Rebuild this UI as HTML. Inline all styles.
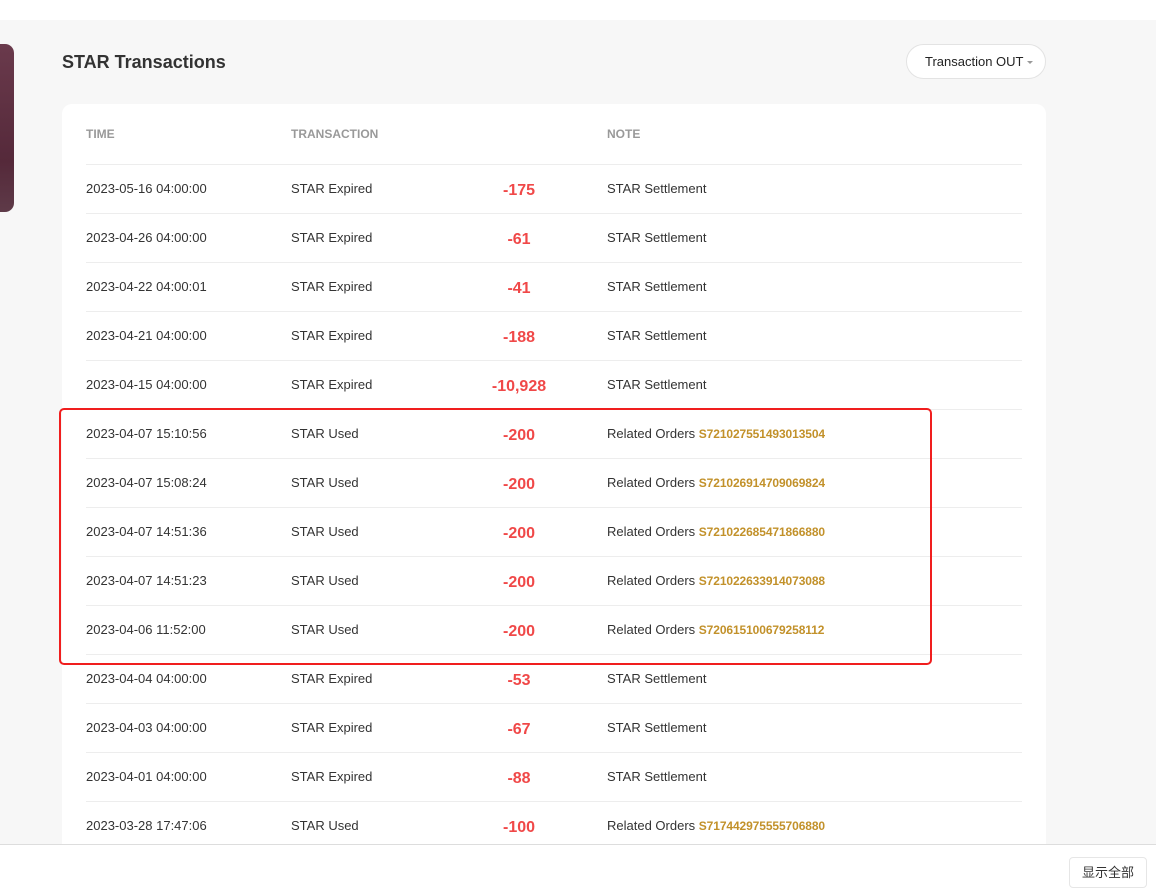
<!DOCTYPE html>
<html><head><meta charset="utf-8"><style>
*{margin:0;padding:0;box-sizing:border-box}
body{width:1156px;height:893px;overflow:hidden;background:#fff;font-family:"Liberation Sans","Noto Sans CJK SC",sans-serif;position:relative}
.bg{position:absolute;left:0;top:20px;width:1156px;height:824px;background:#f7f7f7}
.side{position:absolute;left:-10px;top:44px;width:24px;height:168px;border-radius:0 9px 9px 0;background:linear-gradient(180deg,#6a3a4c,#55293a 70%,#5e3a48)}
h1{position:absolute;left:62px;top:52px;font-size:18px;font-weight:bold;color:#333}
.sel{position:absolute;left:906px;top:44px;width:140px;height:35px;border:1px solid #e3e3e3;border-radius:18px;background:#fff;font-size:13px;color:#222;line-height:33px;padding-left:18px}
.sel:after{content:"";position:absolute;left:120px;top:16px;border:3px solid transparent;border-top:3px solid #999}
.card{position:absolute;left:62px;top:104px;width:984px;height:760px;background:#fff;border-radius:10px}
.row{position:absolute;left:24px;width:936px;height:49px;border-top:1px solid #ededed;font-size:13px;color:#333}
.row span{position:absolute;top:16px;white-space:nowrap}
.t{left:0}.x{left:205px}.a{left:360px;width:146px;text-align:center;color:#f04848;font-weight:bold;font-size:16px;top:17px!important}.n{left:521px}
.o{color:#c2912a;font-weight:bold;font-size:12px;letter-spacing:-0.1px}
.hd{position:absolute;top:23px;font-size:12px;color:#999;font-weight:bold}
.red{position:absolute;left:59px;top:408px;width:873px;height:257px;border:2px solid #f01e1e;border-radius:5px}
.foot{position:absolute;left:0;top:844px;width:1156px;height:49px;background:#fff;border-top:1px solid #ddd}
.btn{position:absolute;left:1069px;top:12px;width:78px;height:31px;border:1px solid #e6e6e6;border-radius:4px;font-size:13px;color:#333;text-align:center;line-height:29px}
</style></head><body>
<div class="bg"></div>
<div class="side"></div>
<h1>STAR Transactions</h1>
<div class="sel">Transaction OUT</div>
<div class="card">
<span class="hd" style="left:24px">TIME</span>
<span class="hd" style="left:229px">TRANSACTION</span>
<span class="hd" style="left:545px">NOTE</span>
<div class="row" style="top:60px"><span class="t">2023-05-16 04:00:00</span><span class="x">STAR Expired</span><span class="a">-175</span><span class="n">STAR Settlement</span></div>
<div class="row" style="top:109px"><span class="t">2023-04-26 04:00:00</span><span class="x">STAR Expired</span><span class="a">-61</span><span class="n">STAR Settlement</span></div>
<div class="row" style="top:158px"><span class="t">2023-04-22 04:00:01</span><span class="x">STAR Expired</span><span class="a">-41</span><span class="n">STAR Settlement</span></div>
<div class="row" style="top:207px"><span class="t">2023-04-21 04:00:00</span><span class="x">STAR Expired</span><span class="a">-188</span><span class="n">STAR Settlement</span></div>
<div class="row" style="top:256px"><span class="t">2023-04-15 04:00:00</span><span class="x">STAR Expired</span><span class="a">-10,928</span><span class="n">STAR Settlement</span></div>
<div class="row" style="top:305px"><span class="t">2023-04-07 15:10:56</span><span class="x">STAR Used</span><span class="a">-200</span><span class="n">Related Orders <b class="o">S721027551493013504</b></span></div>
<div class="row" style="top:354px"><span class="t">2023-04-07 15:08:24</span><span class="x">STAR Used</span><span class="a">-200</span><span class="n">Related Orders <b class="o">S721026914709069824</b></span></div>
<div class="row" style="top:403px"><span class="t">2023-04-07 14:51:36</span><span class="x">STAR Used</span><span class="a">-200</span><span class="n">Related Orders <b class="o">S721022685471866880</b></span></div>
<div class="row" style="top:452px"><span class="t">2023-04-07 14:51:23</span><span class="x">STAR Used</span><span class="a">-200</span><span class="n">Related Orders <b class="o">S721022633914073088</b></span></div>
<div class="row" style="top:501px"><span class="t">2023-04-06 11:52:00</span><span class="x">STAR Used</span><span class="a">-200</span><span class="n">Related Orders <b class="o">S720615100679258112</b></span></div>
<div class="row" style="top:550px"><span class="t">2023-04-04 04:00:00</span><span class="x">STAR Expired</span><span class="a">-53</span><span class="n">STAR Settlement</span></div>
<div class="row" style="top:599px"><span class="t">2023-04-03 04:00:00</span><span class="x">STAR Expired</span><span class="a">-67</span><span class="n">STAR Settlement</span></div>
<div class="row" style="top:648px"><span class="t">2023-04-01 04:00:00</span><span class="x">STAR Expired</span><span class="a">-88</span><span class="n">STAR Settlement</span></div>
<div class="row" style="top:697px"><span class="t">2023-03-28 17:47:06</span><span class="x">STAR Used</span><span class="a">-100</span><span class="n">Related Orders <b class="o">S717442975555706880</b></span></div>
</div>
<div class="red"></div>
<div class="foot"><div class="btn">显示全部</div></div>
</body></html>
